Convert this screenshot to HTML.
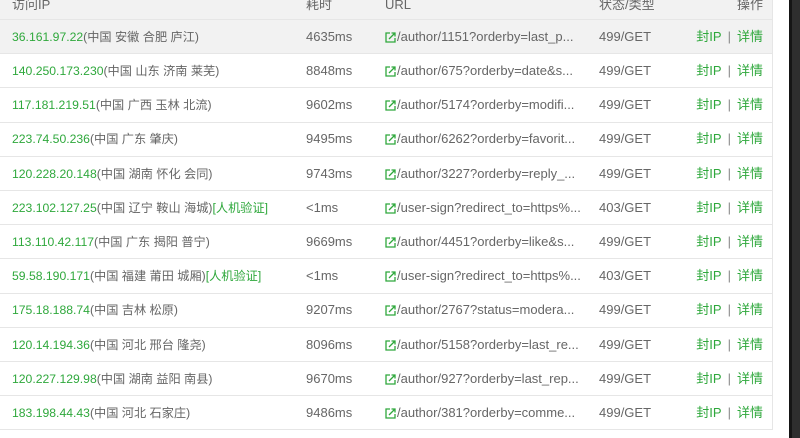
<!DOCTYPE html>
<html><head><meta charset="utf-8"><style>
*{margin:0;padding:0;box-sizing:border-box}
body{width:800px;height:438px;overflow:hidden;background:#fff;font-family:"Liberation Sans","Noto Sans CJK SC",sans-serif;font-size:13px;color:#666;position:relative}
.bar{position:absolute;left:789px;top:0;width:11px;height:438px;background:#2e2e2e;border-left:3px solid #151515}
.tbl{position:absolute;left:0;top:-14px;width:773px;border-right:1px solid #e6e6e6}
.r{position:relative;height:34.2px;border-bottom:1px solid #e6e6e6;white-space:nowrap}
.h{height:34px;background:#f2f2f2}
.r.g{background:#f2f2f2}
.r span{position:absolute;top:51%;transform:translateY(-50%);line-height:16px}
.ip{left:12px;font-size:12.2px}.t{left:306px}.u{left:385px}.s{left:599px}.o{right:9px}
.gr{color:#2fa83c;font-weight:normal}
.ic{display:inline-block;vertical-align:-2px;margin-right:1px}
.sep{color:#888;margin:0 6px}
.h span{top:19px}
</style></head><body>
<div class="tbl">
<div class="r h"><span class="ip" style="font-size:13px">访问IP</span><span class="t">耗时</span><span class="u">URL</span><span class="s">状态/类型</span><span class="o">操作</span></div>
<div class="r g"><span class="ip"><b class="gr">36.161.97.22</b>(中国 安徽 合肥 庐江)</span><span class="t">4635ms</span><span class="u"><svg class="ic" width="11" height="11" viewBox="0 0 11 11"><path d="M5 1H1v9h9V6" fill="none" stroke="#2fa83c" stroke-width="1.3"/><path d="M4 7l6-6M6.5 1H10v3.5" fill="none" stroke="#2fa83c" stroke-width="1.3"/></svg>/author/1151?orderby=last_p...</span><span class="s">499/GET</span><span class="o"><b class="gr">封IP</b><span style="position:static" class="sep">|</span><b class="gr">详情</b></span></div>
<div class="r"><span class="ip"><b class="gr">140.250.173.230</b>(中国 山东 济南 莱芜)</span><span class="t">8848ms</span><span class="u"><svg class="ic" width="11" height="11" viewBox="0 0 11 11"><path d="M5 1H1v9h9V6" fill="none" stroke="#2fa83c" stroke-width="1.3"/><path d="M4 7l6-6M6.5 1H10v3.5" fill="none" stroke="#2fa83c" stroke-width="1.3"/></svg>/author/675?orderby=date&amp;s...</span><span class="s">499/GET</span><span class="o"><b class="gr">封IP</b><span style="position:static" class="sep">|</span><b class="gr">详情</b></span></div>
<div class="r"><span class="ip"><b class="gr">117.181.219.51</b>(中国 广西 玉林 北流)</span><span class="t">9602ms</span><span class="u"><svg class="ic" width="11" height="11" viewBox="0 0 11 11"><path d="M5 1H1v9h9V6" fill="none" stroke="#2fa83c" stroke-width="1.3"/><path d="M4 7l6-6M6.5 1H10v3.5" fill="none" stroke="#2fa83c" stroke-width="1.3"/></svg>/author/5174?orderby=modifi...</span><span class="s">499/GET</span><span class="o"><b class="gr">封IP</b><span style="position:static" class="sep">|</span><b class="gr">详情</b></span></div>
<div class="r"><span class="ip"><b class="gr">223.74.50.236</b>(中国 广东 肇庆)</span><span class="t">9495ms</span><span class="u"><svg class="ic" width="11" height="11" viewBox="0 0 11 11"><path d="M5 1H1v9h9V6" fill="none" stroke="#2fa83c" stroke-width="1.3"/><path d="M4 7l6-6M6.5 1H10v3.5" fill="none" stroke="#2fa83c" stroke-width="1.3"/></svg>/author/6262?orderby=favorit...</span><span class="s">499/GET</span><span class="o"><b class="gr">封IP</b><span style="position:static" class="sep">|</span><b class="gr">详情</b></span></div>
<div class="r"><span class="ip"><b class="gr">120.228.20.148</b>(中国 湖南 怀化 会同)</span><span class="t">9743ms</span><span class="u"><svg class="ic" width="11" height="11" viewBox="0 0 11 11"><path d="M5 1H1v9h9V6" fill="none" stroke="#2fa83c" stroke-width="1.3"/><path d="M4 7l6-6M6.5 1H10v3.5" fill="none" stroke="#2fa83c" stroke-width="1.3"/></svg>/author/3227?orderby=reply_...</span><span class="s">499/GET</span><span class="o"><b class="gr">封IP</b><span style="position:static" class="sep">|</span><b class="gr">详情</b></span></div>
<div class="r"><span class="ip"><b class="gr">223.102.127.25</b>(中国 辽宁 鞍山 海城)<b class="gr">[人机验证]</b></span><span class="t">&lt;1ms</span><span class="u"><svg class="ic" width="11" height="11" viewBox="0 0 11 11"><path d="M5 1H1v9h9V6" fill="none" stroke="#2fa83c" stroke-width="1.3"/><path d="M4 7l6-6M6.5 1H10v3.5" fill="none" stroke="#2fa83c" stroke-width="1.3"/></svg>/user-sign?redirect_to=https%...</span><span class="s">403/GET</span><span class="o"><b class="gr">封IP</b><span style="position:static" class="sep">|</span><b class="gr">详情</b></span></div>
<div class="r"><span class="ip"><b class="gr">113.110.42.117</b>(中国 广东 揭阳 普宁)</span><span class="t">9669ms</span><span class="u"><svg class="ic" width="11" height="11" viewBox="0 0 11 11"><path d="M5 1H1v9h9V6" fill="none" stroke="#2fa83c" stroke-width="1.3"/><path d="M4 7l6-6M6.5 1H10v3.5" fill="none" stroke="#2fa83c" stroke-width="1.3"/></svg>/author/4451?orderby=like&amp;s...</span><span class="s">499/GET</span><span class="o"><b class="gr">封IP</b><span style="position:static" class="sep">|</span><b class="gr">详情</b></span></div>
<div class="r"><span class="ip"><b class="gr">59.58.190.171</b>(中国 福建 莆田 城厢)<b class="gr">[人机验证]</b></span><span class="t">&lt;1ms</span><span class="u"><svg class="ic" width="11" height="11" viewBox="0 0 11 11"><path d="M5 1H1v9h9V6" fill="none" stroke="#2fa83c" stroke-width="1.3"/><path d="M4 7l6-6M6.5 1H10v3.5" fill="none" stroke="#2fa83c" stroke-width="1.3"/></svg>/user-sign?redirect_to=https%...</span><span class="s">403/GET</span><span class="o"><b class="gr">封IP</b><span style="position:static" class="sep">|</span><b class="gr">详情</b></span></div>
<div class="r"><span class="ip"><b class="gr">175.18.188.74</b>(中国 吉林 松原)</span><span class="t">9207ms</span><span class="u"><svg class="ic" width="11" height="11" viewBox="0 0 11 11"><path d="M5 1H1v9h9V6" fill="none" stroke="#2fa83c" stroke-width="1.3"/><path d="M4 7l6-6M6.5 1H10v3.5" fill="none" stroke="#2fa83c" stroke-width="1.3"/></svg>/author/2767?status=modera...</span><span class="s">499/GET</span><span class="o"><b class="gr">封IP</b><span style="position:static" class="sep">|</span><b class="gr">详情</b></span></div>
<div class="r"><span class="ip"><b class="gr">120.14.194.36</b>(中国 河北 邢台 隆尧)</span><span class="t">8096ms</span><span class="u"><svg class="ic" width="11" height="11" viewBox="0 0 11 11"><path d="M5 1H1v9h9V6" fill="none" stroke="#2fa83c" stroke-width="1.3"/><path d="M4 7l6-6M6.5 1H10v3.5" fill="none" stroke="#2fa83c" stroke-width="1.3"/></svg>/author/5158?orderby=last_re...</span><span class="s">499/GET</span><span class="o"><b class="gr">封IP</b><span style="position:static" class="sep">|</span><b class="gr">详情</b></span></div>
<div class="r"><span class="ip"><b class="gr">120.227.129.98</b>(中国 湖南 益阳 南县)</span><span class="t">9670ms</span><span class="u"><svg class="ic" width="11" height="11" viewBox="0 0 11 11"><path d="M5 1H1v9h9V6" fill="none" stroke="#2fa83c" stroke-width="1.3"/><path d="M4 7l6-6M6.5 1H10v3.5" fill="none" stroke="#2fa83c" stroke-width="1.3"/></svg>/author/927?orderby=last_rep...</span><span class="s">499/GET</span><span class="o"><b class="gr">封IP</b><span style="position:static" class="sep">|</span><b class="gr">详情</b></span></div>
<div class="r"><span class="ip"><b class="gr">183.198.44.43</b>(中国 河北 石家庄)</span><span class="t">9486ms</span><span class="u"><svg class="ic" width="11" height="11" viewBox="0 0 11 11"><path d="M5 1H1v9h9V6" fill="none" stroke="#2fa83c" stroke-width="1.3"/><path d="M4 7l6-6M6.5 1H10v3.5" fill="none" stroke="#2fa83c" stroke-width="1.3"/></svg>/author/381?orderby=comme...</span><span class="s">499/GET</span><span class="o"><b class="gr">封IP</b><span style="position:static" class="sep">|</span><b class="gr">详情</b></span></div>
</div>
<div class="bar"></div>
</body></html>
